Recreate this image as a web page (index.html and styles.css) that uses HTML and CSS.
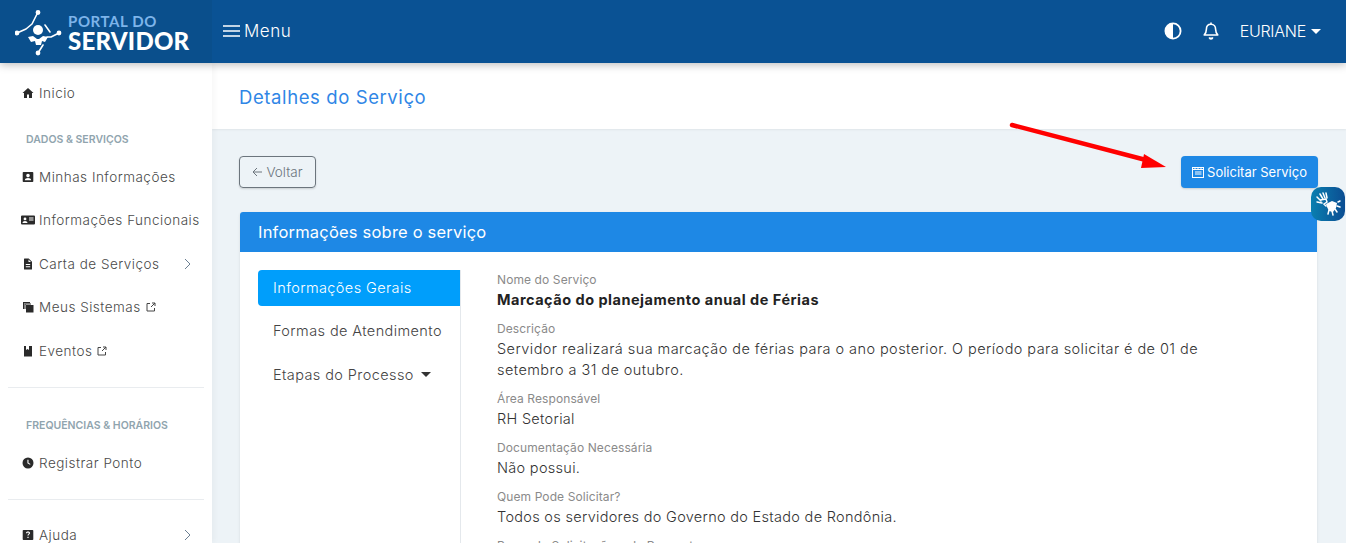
FILE: index.html
```html
<!DOCTYPE html>
<html lang="pt-BR">
<head>
<meta charset="utf-8">
<title>Detalhes do Serviço</title>
<link rel="stylesheet" href="styles.css">
</head>
<body>
<header class="topbar">
  <div class="brand">
    <svg class="brand-icon" viewBox="0 0 48 48" width="48" height="48" fill="none" stroke="#fff" stroke-width="1.6" stroke-linecap="round" stroke-linejoin="round">
      <path d="M23 2 17 14 11 19 2 23"/>
      <path d="M30 15 35 22"/>
      <path d="M32 27 36 27 44 23"/>
      <path d="M28 35 23 43"/>
      <circle cx="23" cy="2.5" r="1.6" fill="#fff"/><circle cx="2" cy="23" r="1.6" fill="#fff"/><circle cx="44" cy="23" r="1.6" fill="#fff"/><circle cx="23" cy="43" r="1.6" fill="#fff"/>
      <circle cx="23" cy="20" r="5" fill="#fff" stroke="none"/>
      <path d="M13 27 18 26 22 29 24 29 28 26 33 27 30 32 27 31 26 35 21 35 20 31 16 32Z" fill="#fff" stroke="none"/>
    </svg>
    <div class="brand-text"><span class="brand-top">PORTAL DO</span><span class="brand-main">SERVIDOR</span></div>
  </div>
  <div class="menu-toggle">
    <svg width="17" height="14" viewBox="0 0 17 14"><path d="M0 2h17M0 7h17M0 12h17" stroke="#fff" stroke-width="1.6"/></svg>
    <span>Menu</span>
  </div>
  <div class="top-actions">
    <svg width="18" height="18" viewBox="0 0 18 18"><circle cx="9" cy="9" r="7.6" fill="#0a5294" stroke="#fff" stroke-width="1.8"/><path d="M9 1.400a7.600 7.600 0 0 0 0 15.200z" fill="#fff"/></svg>
    <svg class="bell" width="16" height="18" viewBox="0 0 16 18" fill="none" stroke="#fff" stroke-width="1.6" stroke-linejoin="round"><path d="M8 2.200c-3 0-4.600 2.300-4.600 5 0 3.200-1 4.400-2.200 5.800h13.600c-1.200-1.400-2.200-2.600-2.200-5.800 0-2.700-1.600-5-4.600-5z"/><path d="M8 .6v1.600"/><path d="M6.200 15.400c.3 1 1 1.500 1.800 1.500s1.500-.5 1.800-1.500" fill="#fff"/></svg>
    <span class="user">EURIANE<i class="caret"></i></span>
  </div>
</header>
<div class="shell">
  <nav class="sidebar">
    <a class="nav-item first"><svg class="ico" viewBox="0 0 12 12"><path d="M6 1 .5 6H2v5h3V7.500h2V11h3V6h1.500z"/></svg><span>Inicio</span></a>
    <div class="nav-label">DADOS &amp; SERVIÇOS</div>
    <a class="nav-item"><svg class="ico" viewBox="0 0 12 12"><path fill-rule="evenodd" d="M1.500 1h9a.8.8 0 0 1 .8.8v8.400a.8.8 0 0 1-.8.8h-9a.8.8 0 0 1-.8-.8V1.800a.8.8 0 0 1 .8-.8zM6 2.800a1.800 1.800 0 1 0 0 3.600 1.800 1.800 0 0 0 0-3.600zM2.800 9.200h6.400C9 7.800 7.800 7 6 7s-3 .8-3.200 2.200z"/></svg><span>Minhas Informações</span></a>
    <a class="nav-item"><svg class="ico wide" viewBox="0 0 14 12"><path fill-rule="evenodd" d="M1 1.500h12a1 1 0 0 1 1 1v7a1 1 0 0 1-1 1H1a1 1 0 0 1-1-1v-7a1 1 0 0 1 1-1zM4 3.500a1.400 1.400 0 1 0 0 2.800 1.400 1.400 0 0 0 0-2.800zM1.500 9h5c-.2-1.200-1.100-1.900-2.500-1.900S1.700 7.800 1.500 9zM8 3.500v1h4.500v-1zM8 5.500v1h4.500v-1z"/></svg><span>Informações Funcionais</span></a>
    <a class="nav-item"><svg class="ico" viewBox="0 0 12 12"><path fill-rule="evenodd" d="M2.500.5h4.200L10 3.800V11a.5.500 0 0 1-.5.500h-7A.5.500 0 0 1 2 11V1a.5.500 0 0 1 .5-.5zM6.500 1.500V4H9zM3.800 6v1h4.400V6zM3.800 8.200v1h4.400v-1z"/></svg><span>Carta de Serviços</span><svg class="chev" width="7" height="12" viewBox="0 0 7 12"><path d="M1 1l5 5-5 5" fill="none" stroke="#6b7f92" stroke-width="1"/></svg></a>
    <a class="nav-item"><svg class="ico" viewBox="0 0 12 12"><path d="M4 4h7.500v7.500H4z"/><path d="M1 1h7v1.200H2.200V8H1z"/><path d="M2.500 2.500H9v1H3.500V8h-1z"/></svg><span>Meus Sistemas</span><svg class="ext" viewBox="0 0 10 10"><path d="M4 1.500H1v7.500h7.500V6M5 5l4-4M6 1h3v3" fill="none" stroke="#444" stroke-width="1"/></svg></a>
    <a class="nav-item"><svg class="ico" viewBox="0 0 12 12"><path d="M2 1h2v4l1.500-1L7 5V1h3v10.500H2z"/></svg><span>Eventos</span><svg class="ext" viewBox="0 0 10 10"><path d="M4 1.500H1v7.500h7.500V6M5 5l4-4M6 1h3v3" fill="none" stroke="#444" stroke-width="1"/></svg></a>
    <hr class="nav-rule">
    <div class="nav-label second">FREQUÊNCIAS &amp; HORÁRIOS</div>
    <a class="nav-item"><svg class="ico" viewBox="0 0 12 12"><path fill-rule="evenodd" d="M6 .5a5.500 5.500 0 1 1 0 11 5.500 5.500 0 0 1 0-11zM5.400 2.800v3.500l2.600 1.500.5-.9-2-1.200V2.800z"/></svg><span>Registrar Ponto</span></a>
    <hr class="nav-rule">
    <a class="nav-item"><svg class="ico" viewBox="0 0 12 12"><path fill-rule="evenodd" d="M1.500 1h9a.8.8 0 0 1 .8.8v8.400a.8.8 0 0 1-.8.8h-9a.8.8 0 0 1-.8-.8V1.800a.8.8 0 0 1 .8-.8zM6 2.500c-1.300 0-2 .7-2.100 1.700h1.200c.1-.4.400-.7.900-.7s.8.300.8.700c0 .8-1.400.8-1.400 2.300h1.200c0-1 1.500-1.100 1.500-2.400C8.100 3.200 7.200 2.500 6 2.500zM5.400 7.800v1.300h1.200V7.800z"/></svg><span>Ajuda</span><svg class="chev" width="7" height="12" viewBox="0 0 7 12"><path d="M1 1l5 5-5 5" fill="none" stroke="#6b7f92" stroke-width="1"/></svg></a>
  </nav>
  <main class="main">
    <div class="page-title"><h1>Detalhes do Serviço</h1></div>
    <div class="actions">
      <button class="btn-back"><svg width="11" height="10" viewBox="0 0 11 10"><path d="M10 5H1.500M5 1 1 5l4 4" fill="none" stroke="#6c757d" stroke-width="1"/></svg>Voltar</button>
      <button class="btn-primary"><svg width="12" height="12" viewBox="0 0 12 12" fill="none" stroke="#fff" stroke-width="1"><rect x=".5" y="1.500" width="11" height="10"/><path d="M.5 3.500h11M3 6h6.500M3 8h6.500M3 1v2M6 1v2M9 1v2"/></svg>Solicitar Serviço</button>
    </div>
    <section class="card">
      <h2 class="card-head">Informações sobre o serviço</h2>
      <div class="card-body">
        <ul class="tabs">
          <li class="tab active">Informações Gerais</li>
          <li class="tab">Formas de Atendimento</li>
          <li class="tab">Etapas do Processo<i class="caret dark"></i></li>
        </ul>
        <div class="details">
          <div class="field"><label>Nome do Serviço</label><p><strong>Marcação do planejamento anual de Férias</strong></p></div>
          <div class="field"><label>Descrição</label><p class="long">Servidor realizará sua marcação de férias para o ano posterior. O período para solicitar é de 01 de setembro a 31 de outubro.</p></div>
          <div class="field"><label>Área Responsável</label><p>RH Setorial</p></div>
          <div class="field"><label>Documentação Necessária</label><p>Não possui.</p></div>
          <div class="field"><label>Quem Pode Solicitar?</label><p>Todos os servidores do Governo do Estado de Rondônia.</p></div>
          <div class="field"><label>Prazo de Solicitação e de Resposta</label></div>
        </div>
      </div>
    </section>
  </main>
</div>
<svg class="arrow" width="170" height="60" viewBox="0 0 170 60"><path d="M3 3 137 38" stroke="#f00" stroke-width="4.500" stroke-linecap="round"/><path d="M157 45 132 46 135 32z" fill="#f00"/></svg>
<div class="libras"><svg width="26" height="26" viewBox="0 0 26 26" fill="none" stroke="#fff" stroke-linecap="round"><path d="M5 3l3 5M8 2l2 5M11 2l1 5M2 6l4 4M2 11l5 1M5 9l6-1 1 3-3 2 2 2" stroke-width="1.500"/><path d="M11 13l6-3 5 2-1 5-3 4-4-1-2-4z" fill="#fff" stroke="none"/><path d="M23 11l2-1M22 15l3 1M20 18l2 3M17 20l1 4M14 19l-1 4" stroke-width="1.500"/></svg></div>
</body>
</html>
```
FILE: styles.css
```css
* { box-sizing: border-box; }
html, body { margin: 0; height: 543px; overflow: hidden; }
body { font-family: "Inter", "Liberation Sans", sans-serif; font-weight: 300; font-size: 14px; color: #333; background: #edf3f7; position: relative; }
.topbar { height: 63px; display: flex; align-items: center; background: #0a5294; color: #fff; position: relative; z-index: 2; box-shadow: 0 2px 8px rgba(0,0,0,.25); }
.brand { width: 212px; height: 63px; flex: none; display: flex; align-items: center; gap: 5px; padding-left: 15px; background: #0a4f8c; }
.brand-icon { flex: none; margin-top: 5px; }
.brand-text { display: flex; flex-direction: column; font-family: "Lato", sans-serif; font-weight: 900; padding-top: 3px; }
.brand-top { font-size: 15px; color: #7db4ea; letter-spacing: .6px; line-height: 16px; font-weight: 700; }
.brand-main { font-size: 24px; letter-spacing: .25px; line-height: 24px; }
.menu-toggle { display: flex; align-items: center; gap: 4px; margin-left: 11px; font-size: 17px; letter-spacing: .5px; margin-top: -1px; }
.top-actions { margin-left: auto; display: flex; align-items: center; padding-right: 25px; font-size: 16px; letter-spacing: -.25px; margin-top: -1px; }
.bell { margin-left: 21px; }
.user { margin-left: 21px; display: flex; align-items: center; }
.caret { display: inline-block; width: 0; height: 0; border: 5px solid transparent; border-top-color: #fff; border-bottom-width: 0; margin-left: 5px; }
.caret.dark { border-top-color: #333; margin-left: 7px; }
.shell { display: flex; height: 480px; }
.sidebar { width: 212px; flex: none; background: #fff; padding: 8px 8px 0 8px; box-shadow: 2px 0 6px rgba(0,0,0,.04); overflow: hidden; position: relative; z-index: 1; }
.nav-item { display: flex; align-items: center; height: 43.500px; padding-left: 14px; gap: 3px; color: #4a4a4a; font-size: 13.500px; letter-spacing: .5px; }
.nav-item.first { height: 44px; }
.nav-item span { white-space: nowrap; }
.ico { width: 12px; height: 12px; fill: #2a2a2a; flex: none; margin-right: 2px; }
.ico.wide { width: 14px; margin-left: -1px; margin-right: 1px; }
.ext { width: 10px; height: 10px; margin-left: 2px; }
.chev { margin-left: auto; margin-right: 13px; }
.nav-label { font-size: 10.500px; font-weight: 600; color: #90a4ae; padding-left: 18px; height: 21px; line-height: 21px; margin: 14px 0 5px; white-space: nowrap; }
.nav-rule { border: 0; border-top: 1px solid #e9ecef; margin: 14px 0 0; }
.nav-label.second { margin: 27px 0 6px; }
.nav-rule + .nav-item { margin-top: 13px; }
.main { flex: 1; min-width: 0; }
.page-title { height: 66px; background: #fff; display: flex; align-items: center; padding: 2px 0 0 27px; box-shadow: 0 1px 2px rgba(0,0,0,.06); }
h1 { margin: 0; font-size: 18.500px; font-weight: 400; color: #2f86e6; letter-spacing: .6px; }
.actions { display: flex; justify-content: space-between; align-items: center; padding: 27px 28px 0 27px; }
.btn-back { height: 32px; width: 77px; display: flex; align-items: center; justify-content: center; gap: 3px; background: transparent; border: 1px solid #6c757d; border-radius: 4px; color: #6c757d; font: inherit; font-size: 13.500px; box-shadow: 0 1px 2px rgba(0,0,0,.15); }
.btn-primary { height: 32px; width: 137px; display: flex; align-items: center; justify-content: center; gap: 3px; background: #1e88e5; border: 0; border-radius: 4px; color: #fff; font: inherit; font-weight: 400; font-size: 13px; box-shadow: 0 1px 2px rgba(0,0,0,.15); white-space: nowrap; }
.card { margin: 24px 29px 0 28px; background: #fff; border-radius: 3px 3px 0 0; box-shadow: 0 1px 3px rgba(0,0,0,.1); height: 340px; overflow: hidden; }
.card-head { margin: 0; height: 40px; background: #1e88e5; color: #fff; font-size: 16.500px; font-weight: 400; line-height: 40px; padding-left: 18px; letter-spacing: .2px; }
.card-body { display: flex; padding: 18px 0 0 18px; }
.tabs { list-style: none; margin: 0; padding: 0; width: 203px; height: 300px; flex: none; border-right: 1px solid #e4e8ec; }
.tab { height: 36px; padding: 0 0 1.500px 15px; margin-bottom: 7.500px; font-size: 14.500px; letter-spacing: .4px; color: #444; display: flex; align-items: center; }
.tab.active { background: #009efb; color: #fff; border-radius: 4px 0 0 4px; }
.details { padding: 1px 0 0 36px; flex: 1; min-width: 0; max-width: 745px; }
.field { margin-bottom: 10px; }
.field label { display: block; font-size: 12px; color: #8a8a8a; line-height: 18px; font-weight: 400; letter-spacing: .1px; }
.field p { margin: 0; font-size: 14.500px; line-height: 21px; color: #333; letter-spacing: .3px; }
.field p.long { letter-spacing: .44px; }
.field strong { font-weight: 700; color: #222; font-size: 14.500px; letter-spacing: .5px; }
.arrow { position: absolute; left: 1009px; top: 122px; z-index: 3; }
.libras { position: absolute; left: 1311px; top: 187px; width: 34px; height: 34px; border-radius: 10px; background: linear-gradient(90deg, #0a7fb0, #0b4d92); display: flex; align-items: center; justify-content: center; z-index: 3; }
```
